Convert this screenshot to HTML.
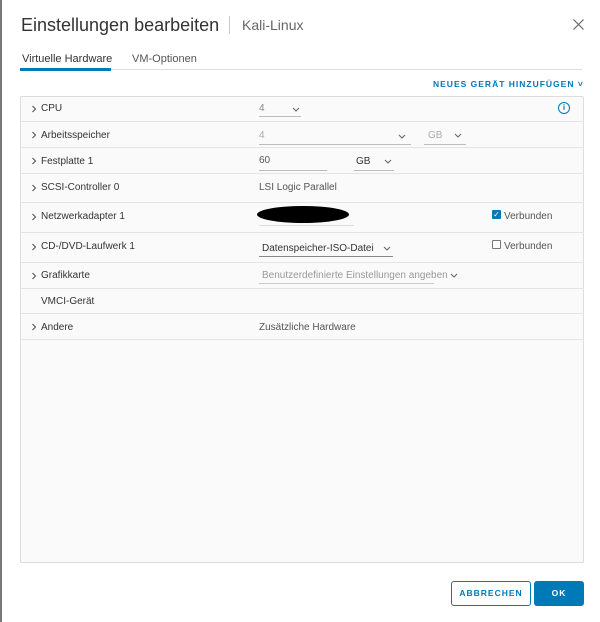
<!DOCTYPE html>
<html><head><meta charset="utf-8"><style>
*{box-sizing:border-box;margin:0;padding:0}
body{width:600px;height:622px;background:#fff;font-family:"Liberation Sans",sans-serif;position:relative;overflow:hidden;color:#333}
.edge{position:absolute;left:0;top:0;width:2px;height:622px;background:#777}
.abs{position:absolute;white-space:nowrap}
.row{position:absolute;left:20px;width:564px;border-bottom:1px solid #e4e4e4}
.lbl{position:absolute;left:21px;font-size:10px;color:#333}
.chev{position:absolute;left:11px;width:6px;height:8px}
.val{position:absolute;left:239px;font-size:10px;color:#555}
.ul{position:absolute;border-bottom:1px solid #bbb}
.dd{position:absolute;width:8px;height:5px}
.cb{position:absolute;width:9px;height:9px;border:1px solid #777;border-radius:1px;background:#fff}
</style></head><body>
<svg width="0" height="0" style="position:absolute"><defs>
<symbol id="c" viewBox="0 0 6 8"><path d="M1.5 1 L4.5 4 L1.5 7" fill="none" stroke="#555" stroke-width="1.1"/></symbol>
<symbol id="d" viewBox="0 0 8 5"><path d="M1 1 L4 4 L7 1" fill="none" stroke="#666" stroke-width="1.1"/></symbol>
</defs></svg>
<div class="edge"></div>
<div class="abs" style="left:21px;top:15px;font-size:18px;color:#333">Einstellungen bearbeiten</div>
<div class="abs" style="left:229px;top:16px;width:1px;height:18px;background:#ccc"></div>
<div class="abs" style="left:242px;top:17px;font-size:14px;color:#666">Kali-Linux</div>
<svg class="abs" style="left:573px;top:19px" width="11" height="11"><path d="M0.5 0.5 L10.5 10.5 M10.5 0.5 L0.5 10.5" stroke="#666" stroke-width="1.2"/></svg>
<div class="abs" style="left:22px;top:53px;font-size:11px;color:#333">Virtuelle Hardware</div>
<div class="abs" style="left:132px;top:53px;font-size:11px;color:#555">VM-Optionen</div>
<div class="abs" style="left:20px;top:69px;width:562px;height:1px;background:#ddd"></div>
<div class="abs" style="left:20px;top:68px;width:91px;height:3px;background:#0079b8"></div>
<div class="abs" style="left:433px;top:79px;font-size:8.5px;color:#0079b8;letter-spacing:1px;font-weight:bold">NEUES GERÄT HINZUFÜGEN ˅</div>
<div class="abs" style="left:20px;top:96px;width:564px;height:467px;background:#fafafa;border:1px solid #ddd;border-radius:2px"></div>

<div class="row" style="top:96px;height:26px"><svg class="chev" style="top:9px"><use href="#c"/></svg><span class="lbl" style="top:7px">CPU</span>
<span class="val" style="top:7px;color:#888">4</span><svg class="dd" style="left:272px;top:11px"><use href="#d"/></svg><div class="ul" style="left:239px;top:20px;width:42px"></div>
<div class="abs" style="left:538px;top:6px;width:12px;height:12px;border:1.5px solid #0079b8;border-radius:50%;font-size:8px;color:#0079b8;text-align:center;line-height:9px;font-weight:bold">i</div></div>

<div class="row" style="top:122px;height:26px"><svg class="chev" style="top:9px"><use href="#c"/></svg><span class="lbl" style="top:8px">Arbeitsspeicher</span>
<span class="val" style="top:8px;color:#aaa">4</span><svg class="dd" style="left:378px;top:12px"><use href="#d"/></svg><div class="ul" style="left:239px;top:22px;width:152px"></div>
<span class="val" style="left:408px;top:8px;color:#aaa">GB</span><svg class="dd" style="left:434px;top:11px"><use href="#d"/></svg><div class="ul" style="left:404px;top:22px;width:42px"></div></div>

<div class="row" style="top:148px;height:26px"><svg class="chev" style="top:9px"><use href="#c"/></svg><span class="lbl" style="top:8px">Festplatte 1</span>
<span class="val" style="top:7px">60</span><div class="ul" style="left:239px;top:22px;width:68px"></div>
<span class="val" style="left:336px;top:8px;color:#333">GB</span><svg class="dd" style="left:364px;top:11px"><use href="#d"/></svg><div class="ul" style="left:334px;top:22px;width:40px"></div></div>

<div class="row" style="top:174px;height:29px"><svg class="chev" style="top:10px"><use href="#c"/></svg><span class="lbl" style="top:8px">SCSI-Controller 0</span>
<span class="val" style="top:8px">LSI Logic Parallel</span></div>

<div class="row" style="top:203px;height:30px"><svg class="chev" style="top:10px"><use href="#c"/></svg><span class="lbl" style="top:8px">Netzwerkadapter 1</span>
<div class="abs" style="left:237px;top:3px;width:92px;height:17px;background:#000;border-radius:50%"></div><div class="ul" style="left:239px;top:22px;width:95px;border-color:#ddd"></div>
<div class="cb" style="left:472px;top:7px;background:#0079b8;border-color:#0079b8;color:#fff;font-size:8px;line-height:7px;text-align:center">✓</div><span class="val" style="left:484px;top:8px">Verbunden</span></div>

<div class="row" style="top:233px;height:30px"><svg class="chev" style="top:10px"><use href="#c"/></svg><span class="lbl" style="top:8px">CD-/DVD-Laufwerk 1</span>
<span class="val" style="left:242px;top:10px;color:#333">Datenspeicher-ISO-Datei</span><svg class="dd" style="left:363px;top:13px"><use href="#d"/></svg><div class="ul" style="left:239px;top:23px;width:134px;border-color:#888"></div>
<div class="cb" style="left:472px;top:7px"></div><span class="val" style="left:484px;top:8px">Verbunden</span></div>

<div class="row" style="top:263px;height:26px"><svg class="chev" style="top:9px"><use href="#c"/></svg><span class="lbl" style="top:7px">Grafikkarte</span>
<span class="val" style="left:242px;top:7px;color:#999">Benutzerdefinierte Einstellungen angeben</span><svg class="dd" style="left:430px;top:10px"><use href="#d"/></svg><div class="ul" style="left:239px;top:20px;width:175px;border-color:#ccc"></div></div>

<div class="row" style="top:289px;height:25px"><span class="lbl" style="top:7px">VMCI-Gerät</span></div>

<div class="row" style="top:314px;height:26px"><svg class="chev" style="top:9px"><use href="#c"/></svg><span class="lbl" style="top:8px">Andere</span>
<span class="val" style="top:8px">Zusätzliche Hardware</span></div>

<div class="abs" style="left:451px;top:581px;width:80px;height:25px;border:1px solid #0079b8;border-radius:3px;font-size:8.5px;font-weight:bold;color:#0079b8;letter-spacing:1px;text-align:center;line-height:23px">ABBRECHEN</div>
<div class="abs" style="left:534px;top:581px;width:50px;height:25px;background:#0079b8;border-radius:3px;font-size:8.5px;font-weight:bold;color:#fff;letter-spacing:1px;text-align:center;line-height:25px">OK</div>
</body></html>
